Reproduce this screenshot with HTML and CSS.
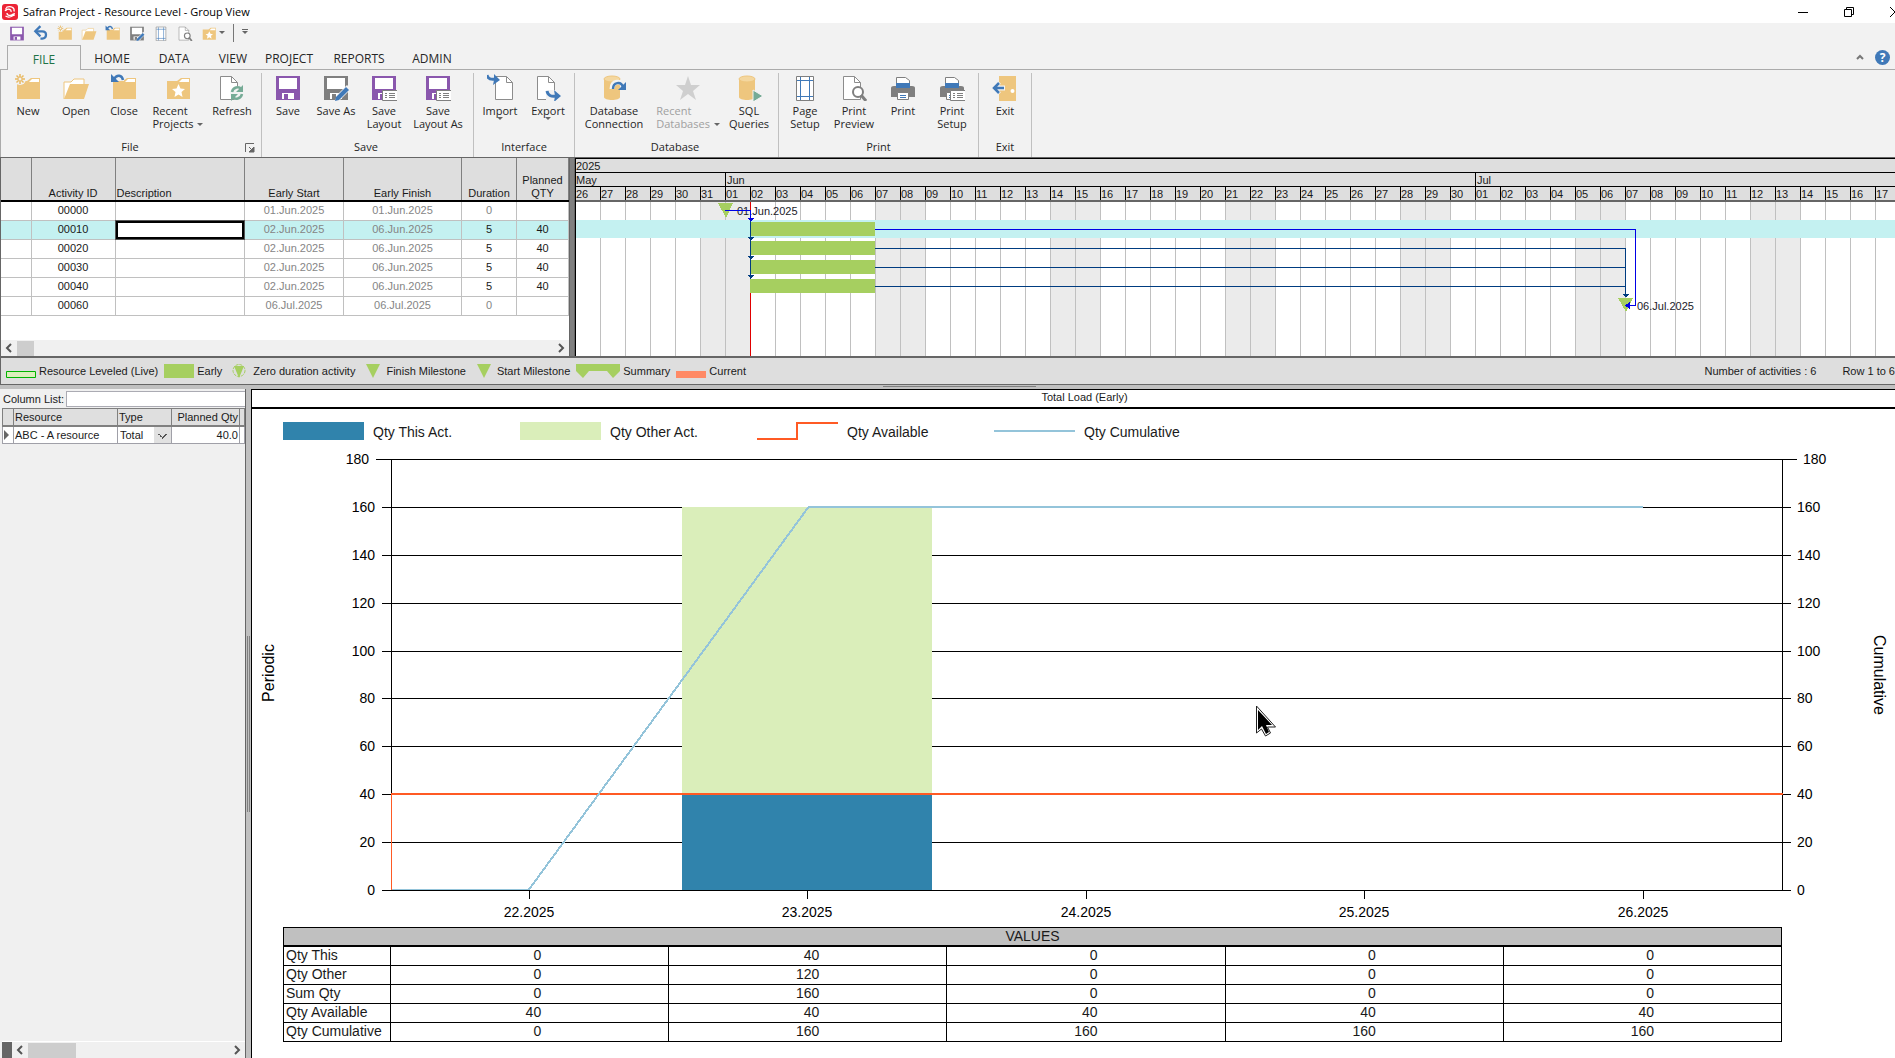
FILE: index.html
```
<!DOCTYPE html>
<html lang="en">

<head>
    <meta charset="UTF-8">
    <meta name="viewport" content="width=device-width, initial-scale=1.0">
    <title>Safran Project - Resource Level - Group View</title>
    <link rel="stylesheet" href="styles.css">
</head>

<body>
    <!-- shared icon shapes -->
    <svg class="defs" aria-hidden="true">
        <symbol id="i-save" viewBox="0 0 26 28">
            <path d="M1 3h24v24H1z" fill="#8a57ad" />
            <path d="M4 5h18v11H4zM7 20h12v6H7z" fill="#fff" />
            <path d="M9 21h4v5H9z" fill="#8a57ad" />
        </symbol>
        <symbol id="i-saveas" viewBox="0 0 26 28">
            <path d="M1 3h24v24H1z" fill="#7f7f7f" />
            <path d="M4 5h18v11H4zM7 20h12v6H7z" fill="#fff" />
            <path d="M9 21h4v5H9z" fill="#7f7f7f" />
            <path d="M12 28l2-6L24 12l4 4-11 11z" fill="#f2f2f2" />
            <path d="M12 28l1-4L23 14l3 3-10 10z" fill="#4079b8" />
        </symbol>
        <symbol id="i-savelayout" viewBox="0 0 26 28">
            <path d="M1 3h24v24H1z" fill="#8a57ad" />
            <path d="M4 5h18v11H4zM7 20h12v6H7z" fill="#fff" />
            <path d="M9 21h4v5H9z" fill="#8a57ad" />
            <use href="#i-list" />
        </symbol>
        <symbol id="i-list" viewBox="0 0 26 28" overflow="visible">
            <path d="M11.5 17.500h15v10h-15z" fill="#fff" stroke="#7f7f7f" />
            <path d="M14 20.500h2M14 22.500h2M14 24.500h2M18 20.500h6M18 22.500h6M18 24.500h6" stroke="#7f7f7f" />
        </symbol>
        <symbol id="i-folder" viewBox="0 0 26 28">
            <path d="M2 8h10l4-3h9v21H2z" fill="#eec67e" />
            <path d="M14 9l3-3h7v3z" fill="#fff" />
        </symbol>
        <symbol id="i-new" viewBox="0 0 26 28">
            <use href="#i-folder" />
            <circle cx="5" cy="6" r="6" fill="#f2f2f2" />
            <path d="M5 1v3M5 8v3M0 6h3M7 6h3M1.500 2.500l2 2M6.500 7.500l2 2M8.500 2.500l-2 2M3.500 7.500l-2 2" stroke="#e9b961" stroke-width="1.500" />
            <circle cx="5" cy="6" r="2" fill="none" stroke="#e9b961" />
        </symbol>
        <symbol id="i-open" viewBox="0 0 26 28">
            <path d="M1 26V9h7l3-3h10v8" fill="#fff" stroke="#eec67e" />
            <path d="M1 26l6-15h19l-5 15z" fill="#eec67e" />
        </symbol>
        <symbol id="i-close" viewBox="0 0 26 28">
            <use href="#i-folder" />
            <path d="M0 0h13v8H0z" fill="#f2f2f2" />
            <path d="M3 6c3-5 8-4 9 1" fill="none" stroke="#4079b8" stroke-width="2.500" />
            <path d="M0 1v8h8z" fill="#4079b8" />
        </symbol>
        <symbol id="i-recent" viewBox="0 0 26 28">
            <use href="#i-folder" />
            <path d="M13.500 11l2 4.500 4.500.5-3.500 3 1 5-4-2.500-4 2.500 1-5-3.500-3 4.500-.5z" fill="#fff" />
        </symbol>
        <symbol id="i-doc" viewBox="0 0 26 28">
            <path d="M4.500 3.500h11l6 6v17h-17z" fill="#fff" stroke="#8c8c8c" />
            <path d="M15.500 3.500v6h6" fill="none" stroke="#8c8c8c" />
        </symbol>
        <symbol id="i-refresh" viewBox="0 0 26 28" overflow="visible">
            <path d="M1.500 3.500h11l6 6v17h-17z" fill="#fff" stroke="#8c8c8c" />
            <path d="M12.500 3.500v6h6" fill="none" stroke="#8c8c8c" />
            <circle cx="18" cy="20" r="7" fill="#f2f2f2" />
            <path d="M13 19c1-5 7-6 9-3M23 21c-1 5-7 6-9 3" fill="none" stroke="#76ab96" stroke-width="2.500" />
            <path d="M24 12v7h-7zM12 28v-7h7z" fill="#76ab96" />
        </symbol>
        <symbol id="i-import" viewBox="0 0 26 28" overflow="visible">
            <use href="#i-doc" x="4" />
            <path d="M0 0h8v8H0z" fill="#f2f2f2" />
            <path d="M0 2c1 4 4 5 9 4" fill="none" stroke="#4079b8" stroke-width="3" />
            <path d="M7 1l6 6-7 5 1-5z" fill="#4079b8" />
        </symbol>
        <symbol id="i-export" viewBox="0 0 26 28" overflow="visible">
            <use href="#i-doc" x="-2" />
            <path d="M11 17h14v11H11z" fill="#f2f2f2" />
            <path d="M12 18c1 5 5 6 9 5" fill="none" stroke="#4079b8" stroke-width="3" />
            <path d="M19 17l7 6-7 6 1-6z" fill="#4079b8" />
        </symbol>
        <symbol id="i-db" viewBox="0 0 26 28">
            <path d="M3 6v18c0 4 16 4 16 0V6z" fill="#eec67e" />
            <ellipse cx="11" cy="6" rx="8" ry="3" fill="#f4d79f" stroke="#eec67e" />
        </symbol>
        <symbol id="i-dbconn" viewBox="0 0 26 28" overflow="visible">
            <use href="#i-db" />
            <path d="M11 16c0-8 9-9 11-3" fill="none" stroke="#f2f2f2" stroke-width="5" />
            <path d="M12 16c0-7 8-8 10-2" fill="none" stroke="#4079b8" stroke-width="2.500" />
            <path d="M25 9v8h-8z" fill="#4079b8" />
        </symbol>
        <symbol id="i-star" viewBox="0 0 26 28">
            <path d="M13 3l3 9h9l-7 6 3 9-8-6-8 6 3-9-7-6h9z" fill="#cfcfcf" />
        </symbol>
        <symbol id="i-sql" viewBox="0 0 26 28" overflow="visible">
            <use href="#i-db" />
            <path d="M17 17l10 6-10 6z" fill="#76ab96" stroke="#f2f2f2" />
        </symbol>
        <symbol id="i-page" viewBox="0 0 26 28">
            <path d="M4.500 3.500h17v24h-17z" fill="#fff" stroke="#7f7f7f" />
            <path d="M8.500 4v23M17.500 4v23M5 7.500h16M5 23.500h16" stroke="#4079b8" />
        </symbol>
        <symbol id="i-preview" viewBox="0 0 26 28" overflow="visible">
            <use href="#i-doc" x="-2" />
            <circle cx="17" cy="19" r="5" fill="#fff" stroke="#7f7f7f" stroke-width="2" />
            <path d="M20 22l5 6" stroke="#7f7f7f" stroke-width="3" />
        </symbol>
        <symbol id="i-print" viewBox="0 0 26 28">
            <path d="M6.500 10V4.500h9l4 3V10" fill="#fff" stroke="#7f7f7f" />
            <path d="M1 15q0-2 3-2h18q3 0 3 2v9H1z" fill="#7f7f7f" />
            <path d="M6 10h14v5H6z" fill="#4079b8" />
            <path d="M7.500 19.500h11v7h-11z" fill="#fff" stroke="#7f7f7f" />
            <path d="M10 22.500h6M10 24.500h6" stroke="#4079b8" />
        </symbol>
        <symbol id="i-printset" viewBox="0 0 26 28" overflow="visible">
            <use href="#i-print" />
            <use href="#i-list" />
        </symbol>
        <symbol id="i-exit" viewBox="0 0 26 28">
            <path d="M7 3h17v25H7z" fill="#eec67e" />
            <circle cx="20.500" cy="18" r="2" fill="#fff" />
            <path d="M1 15h12M7 9l-5 6 5 6" fill="none" stroke="#f2f2f2" stroke-width="5" />
            <path d="M2 15h10M7 10l-5 5 5 5" fill="none" stroke="#4079b8" stroke-width="2.500" />
        </symbol>
        <symbol id="i-undo" viewBox="0 0 26 28">
            <path d="M5 11h10c9 0 9 12 0 13h-3" fill="none" stroke="#4079b8" stroke-width="4" />
            <path d="M12 2L3 11l9 9" fill="none" stroke="#4079b8" stroke-width="4" />
        </symbol>
        <symbol id="i-left" viewBox="0 0 16 16">
            <path d="M10 4L6 8l4 4" fill="none" stroke="#555" stroke-width="2" />
        </symbol>
        <symbol id="i-right" viewBox="0 0 16 16">
            <path d="M6 4l4 4-4 4" fill="none" stroke="#555" stroke-width="2" />
        </symbol>
    </svg>

    <header class="titlebar">
        <svg class="logo" viewBox="0 0 16 16">
            <rect width="16" height="16" rx="3" fill="#ec2436" />
            <path d="M4 3.500c5-2 9 0 8 4M3 7c2-3 7-2 6 1M12.500 9c-1 4-6 5-9 3M5 9c0 3 4 3 6 1M4 4v3M12 12v-3" fill="none" stroke="#fff" stroke-width="1.300" />
        </svg>
        <h1 class="title">Safran Project - Resource Level - Group View</h1>
        <div class="window-btns">
            <button class="win-btn" aria-label="Minimize"><svg viewBox="0 0 12 12"><path d="M1 6.500h10" /></svg></button>
            <button class="win-btn" aria-label="Restore"><svg viewBox="0 0 12 12"><path d="M1.500 3.500h7v7h-7zM3.500 3V1.500h7v7H9" /></svg></button>
            <button class="win-btn" aria-label="Close"><svg viewBox="0 0 12 12"><path d="M1 1l10 10M11 1L1 11" /></svg></button>
        </div>
    </header>

    <div class="quickbar">
        <button class="quick" aria-label="Save"><svg><use href="#i-save" /></svg></button>
        <button class="quick" aria-label="Undo"><svg><use href="#i-undo" /></svg></button>
        <button class="quick" aria-label="New"><svg><use href="#i-new" /></svg></button>
        <button class="quick" aria-label="Open"><svg><use href="#i-open" /></svg></button>
        <button class="quick" aria-label="Close"><svg><use href="#i-close" /></svg></button>
        <button class="quick" aria-label="Save as"><svg><use href="#i-saveas" /></svg></button>
        <button class="quick" aria-label="Page setup"><svg><use href="#i-page" /></svg></button>
        <button class="quick" aria-label="Print preview"><svg><use href="#i-preview" /></svg></button>
        <div class="quick-menu">
            <button class="quick" aria-label="Recent projects"><svg><use href="#i-recent" /></svg></button>
            <i class="caret"></i>
        </div>
        <span class="quick-sep"></span>
        <i class="caret caret-bar"></i>
    </div>

    <nav class="tabs">
        <button class="tab tab-file">FILE</button>
        <button class="tab">HOME</button>
        <button class="tab">DATA</button>
        <button class="tab tab-narrow">VIEW</button>
        <button class="tab tab-narrow">PROJECT</button>
        <button class="tab tab-wide">REPORTS</button>
        <button class="tab">ADMIN</button>
        <div class="tabs-rest">
            <svg class="collapse" viewBox="0 0 10 10"><path d="M2 7l3-3 3 3" fill="none" stroke="#777" stroke-width="2" /></svg>
            <button class="help" aria-label="Help">?</button>
        </div>
    </nav>

    <div class="ribbon">
        <section class="group">
            <div class="tools">
                <button class="tool"><svg><use href="#i-new" /></svg>New</button>
                <button class="tool"><svg><use href="#i-open" /></svg>Open</button>
                <button class="tool"><svg><use href="#i-close" /></svg>Close</button>
                <button class="tool tool-wide"><svg><use href="#i-recent" /></svg><span class="lines">Recent<br>Projects <i class="caret"></i></span></button>
                <button class="tool"><svg><use href="#i-refresh" /></svg>Refresh</button>
            </div>
            <h2 class="group-name">File</h2>
            <svg class="launcher" viewBox="0 0 10 10"><path d="M.5 9V.5H9" fill="none" stroke="#666" /><path d="M4 9h5V4zM4 4l4 4" fill="#666" stroke="#666" /></svg>
        </section>
        <section class="group">
            <div class="tools">
                <button class="tool"><svg><use href="#i-save" /></svg>Save</button>
                <button class="tool"><svg><use href="#i-saveas" /></svg>Save As</button>
                <button class="tool"><svg><use href="#i-savelayout" /></svg>Save<br>Layout</button>
                <button class="tool tool-wide"><svg><use href="#i-savelayout" /></svg>Save<br>Layout As</button>
            </div>
            <h2 class="group-name">Save</h2>
        </section>
        <section class="group group-tight">
            <div class="tools">
                <button class="tool"><svg><use href="#i-import" /></svg>Import<br><i class="caret"></i></button>
                <button class="tool"><svg><use href="#i-export" /></svg>Export<br><i class="caret"></i></button>
            </div>
            <h2 class="group-name">Interface</h2>
        </section>
        <section class="group">
            <div class="tools">
                <button class="tool tool-xwide"><svg><use href="#i-dbconn" /></svg>Database<br>Connection</button>
                <button class="tool tool-xwide" disabled><svg><use href="#i-star" /></svg><span class="lines">Recent<br>Databases <i class="caret"></i></span></button>
                <button class="tool"><svg><use href="#i-sql" /></svg>SQL<br>Queries</button>
            </div>
            <h2 class="group-name">Database</h2>
        </section>
        <section class="group group-tight">
            <div class="tools tools-gap">
                <button class="tool"><svg><use href="#i-page" /></svg>Page<br>Setup</button>
                <button class="tool"><svg><use href="#i-preview" /></svg>Print<br>Preview</button>
                <button class="tool"><svg><use href="#i-print" /></svg>Print</button>
                <button class="tool"><svg><use href="#i-printset" /></svg>Print<br>Setup</button>
            </div>
            <h2 class="group-name">Print</h2>
        </section>
        <section class="group group-tight">
            <div class="tools">
                <button class="tool"><svg><use href="#i-exit" /></svg>Exit</button>
            </div>
            <h2 class="group-name">Exit</h2>
        </section>
    </div>

    <main class="workspace">
        <!-- activities + gantt -->
        <div class="upper">
            <div class="activities">
                <table class="act-table">
                    <colgroup>
                        <col class="c-mark"><col class="c-id"><col><col class="c-start"><col class="c-finish"><col class="c-dur"><col class="c-qty">
                    </colgroup>
                    <thead>
                        <tr>
                            <th></th>
                            <th>Activity ID</th>
                            <th class="left">Description</th>
                            <th>Early Start</th>
                            <th>Early Finish</th>
                            <th>Duration</th>
                            <th>Planned QTY</th>
                        </tr>
                    </thead>
                    <tbody>
                        <tr><td></td><td>00000</td><td></td><td class="dim">01.Jun.2025</td><td class="dim">01.Jun.2025</td><td class="dim">0</td><td></td></tr>
                        <tr class="selected"><td></td><td>00010</td><td class="edit"><input type="text" class="cell-input" aria-label="Description"></td><td class="dim">02.Jun.2025</td><td class="dim">06.Jun.2025</td><td>5</td><td>40</td></tr>
                        <tr><td></td><td>00020</td><td></td><td class="dim">02.Jun.2025</td><td class="dim">06.Jun.2025</td><td>5</td><td>40</td></tr>
                        <tr><td></td><td>00030</td><td></td><td class="dim">02.Jun.2025</td><td class="dim">06.Jun.2025</td><td>5</td><td>40</td></tr>
                        <tr><td></td><td>00040</td><td></td><td class="dim">02.Jun.2025</td><td class="dim">06.Jun.2025</td><td>5</td><td>40</td></tr>
                        <tr><td></td><td>00060</td><td></td><td class="dim">06.Jul.2025</td><td class="dim">06.Jul.2025</td><td class="dim">0</td><td></td></tr>
                    </tbody>
                </table>
                <div class="scrollbar">
                    <button class="arrow" aria-label="Scroll left"><svg><use href="#i-left" /></svg></button>
                    <span class="thumb"></span>
                    <button class="arrow arrow-end" aria-label="Scroll right"><svg><use href="#i-right" /></svg></button>
                </div>
            </div>
            <div class="splitter-v"></div>
            <div class="gantt">
                <div class="scale">2025</div>
                <div class="scale">
                    <span class="month month-may">May</span>
                    <span class="month month-jun">Jun</span>
                    <span class="month">Jul</span>
                </div>
                <div class="scale scale-days" id="days"></div>
                <div class="gantt-body">
                    <svg class="gantt-svg" shape-rendering="crispEdges">
                        <rect x="0" y="18" width="100%" height="18" fill="#c4f1f1" />
                        <path d="M175.500 0v154" stroke="#e00000" />
                        <g fill="#a6cf60">
                            <rect x="175" y="20" width="125" height="14" />
                            <rect x="175" y="39" width="125" height="14" />
                            <rect x="175" y="58" width="125" height="14" />
                            <rect x="175" y="77" width="125" height="14" />
                            <path d="M143 1h15l-7 15zM1043 96h15l-7 14z" />
                        </g>
                        <g font-size="11" fill="#1a1a2a" shape-rendering="auto">
                            <text x="162" y="13">01.Jun.2025</text>
                            <text x="1062" y="108">06.Jul.2025</text>
                        </g>
                        <g fill="none" stroke="#003c80">
                            <path d="M175.500 18v59M300 46.500h750M300 65.500h750M300 84.500h750M1050.500 46v48" />
                        </g>
                        <path d="M150 8.500h25.500v9M300 27.500h760.500v76h-8" fill="none" stroke="#0000e6" />
                        <path d="M172 16h7l-3 4zM1050 103.500l5-4v8z" fill="#0000e6" />
                        <path d="M172 35h7l-3 4zM172 54h7l-3 4zM172 73h7l-3 4zM1047 92h7l-3 4z" fill="#003c80" />
                    </svg>
                </div>
            </div>
        </div>

        <div class="legend">
            <span class="key"><svg width="30" height="14"><path d="M.5 7.500h29v6H.5z" fill="#dbefbb" stroke="#00b400" /></svg>Resource Leveled (Live)</span>
            <span class="key"><svg width="30" height="14"><path d="M0 0h30v14H0z" /></svg>Early</span>
            <span class="key"><svg width="22" height="14"><path d="M6 2h10l-5 12z" /><circle cx="11" cy="6.500" r="6" fill="none" stroke="#a6cf60" stroke-dasharray="3 1" /></svg>Zero duration activity</span>
            <span class="key"><svg width="22" height="14"><path d="M5 0h14l-7 14z" /></svg>Finish Milestone</span>
            <span class="key"><svg width="22" height="14"><path d="M5 0h14l-7 14z" /></svg>Start Milestone</span>
            <span class="key"><svg width="44" height="14"><path d="M0 0h44v7l-7 7-6-7H13l-6 7-7-7z" /></svg>Summary</span>
            <span class="key"><svg width="30" height="14"><path d="M0 7h30v7H0z" fill="#ff8a65" /></svg>Current</span>
            <span class="status">Number of activities : 6</span>
            <span class="status-row">Row 1 to 6</span>
        </div>
        <div class="splitter-h"></div>

        <!-- resource list + load chart -->
        <div class="lower">
            <aside class="resources">
                <div class="column-list">
                    <label for="columnList">Column List:</label>
                    <input type="text" id="columnList" class="column-input">
                </div>
                <table class="res-table">
                    <colgroup><col class="r-mark"><col><col class="r-type"><col class="r-qty"><col class="r-end"></colgroup>
                    <thead>
                        <tr><th></th><th>Resource</th><th>Type</th><th class="right">Planned Qty</th><th></th></tr>
                    </thead>
                    <tbody>
                        <tr>
                            <td><i class="pointer"></i></td>
                            <td>ABC - A resource</td>
                            <td class="pick"><select class="type-select" aria-label="Type"><option>Total</option></select></td>
                            <td class="right">40.0</td>
                            <td></td>
                        </tr>
                    </tbody>
                </table>
                <div class="scrollbar scrollbar-bottom">
                    <span class="grip"></span>
                    <button class="arrow" aria-label="Scroll left"><svg><use href="#i-left" /></svg></button>
                    <span class="thumb thumb-wide"></span>
                    <button class="arrow arrow-end" aria-label="Scroll right"><svg><use href="#i-right" /></svg></button>
                </div>
            </aside>
            <div class="splitter-side"></div>
            <section class="load">
                <h2 class="load-title">Total Load (Early)</h2>
                <div class="chart-legend">
                    <span class="series"><svg><path d="M0 0h81v18H0z" fill="#3083ac" /></svg>Qty This Act.</span>
                    <span class="series"><svg><path d="M0 0h81v18H0z" fill="#daeeba" /></svg>Qty Other Act.</span>
                    <span class="series"><svg><path d="M0 17h40V1h41" fill="none" stroke="#ff5a24" stroke-width="2" /></svg>Qty Available</span>
                    <span class="series"><svg><path d="M0 9h81" stroke="#94c4da" stroke-width="2" /></svg>Qty Cumulative</span>
                </div>
                <svg class="chart" id="chart" viewBox="0 0 1643 477" shape-rendering="crispEdges">
                    <g id="grid" stroke="#000"></g>
                    <rect x="430" y="57" width="250" height="287" fill="#daeeba" />
                    <rect x="430" y="344" width="250" height="96" fill="#3083ac" />
                    <path d="M139.500 9v431M1530.500 9v431" stroke="#000" />
                    <path d="M139.500 440v-96" stroke="#ff5a24" />
                    <path d="M139 344h1392" stroke="#ff5a24" stroke-width="2" />
                    <path d="M140 439.500h137L556.500 57H1391" fill="none" stroke="#94c4da" stroke-width="2" />
                    <path d="M130 440.500h1409" stroke="#000" />
                    <g id="labels" font-size="14"></g>
                    <text class="axis-name" transform="translate(22 223) rotate(-90)">Periodic</text>
                    <text class="axis-name" transform="translate(1622 225) rotate(90)">Cumulative</text>
                    <!-- mouse pointer -->
                    <g shape-rendering="auto">
                        <path d="M1004.500 256v27l5-4 4 7 5-3-3-6h8z" fill="#fff" stroke="#222" stroke-width="1" />
                        <path d="M1006 260v20l4-4 4 8 3-2-3-7h6z" fill="#000" />
                    </g>
                </svg>
                <table class="values">
                    <colgroup><col class="v-name"><col><col><col><col><col></colgroup>
                    <thead>
                        <tr><th colspan="6">VALUES</th></tr>
                    </thead>
                    <tbody>
                        <tr><th>Qty This</th><td>0</td><td>40</td><td>0</td><td>0</td><td>0</td></tr>
                        <tr><th>Qty Other</th><td>0</td><td>120</td><td>0</td><td>0</td><td>0</td></tr>
                        <tr><th>Sum Qty</th><td>0</td><td>160</td><td>0</td><td>0</td><td>0</td></tr>
                        <tr><th>Qty Available</th><td>40</td><td>40</td><td>40</td><td>40</td><td>40</td></tr>
                        <tr><th>Qty Cumulative</th><td>0</td><td>160</td><td>160</td><td>160</td><td>160</td></tr>
                    </tbody>
                </table>
            </section>
        </div>
    </main>

    <script src="script.js"></script>
</body>

</html>
```

FILE: styles.css
```
* {
    margin: 0;
    padding: 0;
    box-sizing: border-box;
}

body {
    min-height: 100vh;
    display: flex;
    flex-direction: column;
    overflow: hidden;
    background-color: #f2f2f2;
    color: #1a1a1a;
    font-family: "Liberation Sans", Arial, sans-serif;
    font-size: 11px;
}

button {
    border: none;
    background: none;
    font: inherit;
    color: inherit;
}

h1,
h2,
th {
    font-size: inherit;
    font-weight: normal;
}

table {
    border-collapse: collapse;
    table-layout: fixed;
    width: 100%;
}

.defs {
    display: none;
}

/* title bar */
.titlebar {
    display: flex;
    align-items: center;
    height: 23px;
    padding-left: 2px;
    background-color: #fff;
    font-family: "Open Sans", "Noto Sans", sans-serif;
    color: #000;
    overflow: hidden;
}

.logo {
    width: 16px;
    height: 16px;
    margin-right: 5px;
}

.title {
    font-size: 11px;
    line-height: 16px;
}

.window-btns {
    display: flex;
    gap: 34px;
    margin-left: auto;
    margin-right: -6px;
}

.win-btn svg {
    display: block;
    width: 12px;
    height: 12px;
    fill: none;
    stroke: #000;
}

/* quick access bar */
.quickbar {
    display: flex;
    align-items: center;
    gap: 8px;
    height: 22px;
    padding: 0 0 3px 9px;
}

.quick svg {
    display: block;
    width: 16px;
    height: 16px;
}

.quick-menu {
    display: flex;
    align-items: center;
    gap: 2px;
}

.caret {
    display: inline-block;
    border: 3px solid transparent;
    border-top-color: #666;
    border-bottom: none;
}

.quick-sep {
    width: 1px;
    height: 18px;
    background-color: #777;
}

.caret-bar::before {
    content: "";
    display: block;
    width: 6px;
    height: 1px;
    margin: -5px -3px 0;
    background-color: #666;
}

/* tabs */
.tabs {
    display: flex;
    height: 25px;
    font-family: "Open Sans", "Noto Sans", sans-serif;
    font-size: 12px;
    color: #262626;
}

.tabs::before {
    content: "";
    width: 7px;
    border-bottom: 1px solid #ababab;
}

.tab {
    width: 62px;
    padding-top: 3px;
    border-bottom: 1px solid #ababab;
}

.tab-file {
    width: 74px;
    border: 1px solid #ababab;
    border-bottom: none;
    color: #217346;
}

.tab-narrow {
    width: 56px;
}

.tab-wide {
    width: 84px;
}

.tabs-rest {
    flex: 1;
    display: flex;
    align-items: center;
    justify-content: flex-end;
    gap: 10px;
    padding: 0 5px 0 0;
    border-bottom: 1px solid #ababab;
}

.collapse {
    width: 10px;
    height: 10px;
}

.help {
    width: 15px;
    height: 15px;
    border-radius: 50%;
    background-color: #4079b8;
    color: #fff;
    font-weight: bold;
    line-height: 15px;
}

/* ribbon */
.ribbon {
    display: flex;
    height: 87px;
    padding: 3px 0 0 1px;
    border-left: 1px solid #ababab;
    font-family: "Open Sans", "Noto Sans", sans-serif;
    font-size: 11px;
    color: #262626;
}

.group {
    position: relative;
    display: flex;
    flex-direction: column;
    justify-content: space-between;
    padding: 0 5px 0 2px;
    border-right: 1px solid #c0c0c0;
    line-height: 13px;
}

.group-tight {
    padding: 0 2px;
}

.tools {
    display: flex;
}

.tools-gap {
    gap: 1px;
}

.tool {
    display: flex;
    flex-direction: column;
    align-items: center;
    width: 48px;
    line-height: 13px;
    white-space: nowrap;
}

.tool:disabled {
    color: #a0a0a0;
}

.tool svg {
    width: 26px;
    height: 28px;
    margin-bottom: 3px;
}

.tool br {
    line-height: 0;
}

.tool-wide {
    width: 60px;
}

.tool-xwide {
    width: 74px;
}

.lines {
    text-align: left;
}

.lines .caret {
    margin: 0 0 2px 1px;
}

.group-name {
    padding-bottom: 4px;
    text-align: center;
}

.launcher {
    position: absolute;
    right: 6px;
    bottom: 4px;
    width: 10px;
    height: 10px;
}

/* upper pane */
.workspace {
    flex: 1;
    display: flex;
    flex-direction: column;
    background-color: #c0c0c0;
}

.upper {
    display: flex;
    border-top: 1px solid #666;
    border-bottom: 2px solid #666;
}

.activities {
    display: flex;
    flex-direction: column;
    width: 569px;
    border-left: 1px solid #666;
    background-color: #fff;
}

.act-table {
    text-align: center;
}

.c-mark {
    width: 30px;
}

.c-id {
    width: 84px;
}

.c-start {
    width: 99px;
}

.c-finish {
    width: 118px;
}

.c-dur {
    width: 55px;
}

.c-qty {
    width: 52px;
}

.act-table th {
    height: 43px;
    border-right: 1px solid #808080;
    border-bottom: 2px solid #000;
    background-color: #dedede;
    line-height: 13px;
    vertical-align: bottom;
}

.act-table td {
    height: 19px;
    border-right: 1px solid #c0c0c0;
    border-bottom: 1px solid #c0c0c0;
    line-height: 16px;
    vertical-align: top;
}

.act-table .left {
    text-align: left;
    padding-left: 1px;
}

.act-table .dim {
    color: #858585;
}

.selected td {
    background-color: #c4f1f1;
}

.cell-input {
    display: block;
    width: 100%;
    height: 18px;
    border: 2px solid #000;
    outline: 1px solid #555;
    background-color: #fff;
    font: inherit;
}

/* scroll bars */
.scrollbar {
    display: flex;
    align-items: center;
    height: 16px;
    margin-top: auto;
    background-color: #f0f0f0;
}

.arrow svg {
    display: block;
    width: 16px;
    height: 16px;
}

.arrow-end {
    margin-left: auto;
}

.thumb {
    width: 17px;
    height: 15px;
    background-color: #cdcdcd;
}

.thumb-wide {
    width: 48px;
}

.splitter-v {
    width: 6px;
    border: 1px solid #666;
    border-width: 0 1px;
    background-color: #808080;
}

/* gantt */
.gantt {
    flex: 1;
    min-width: 0;
    overflow: hidden;
    background-color: #dedede;
    border-left: 1px solid #000;
}

.scale {
    display: flex;
    height: 14px;
    border-top: 1px solid #000;
    line-height: 14px;
}

.scale-days {
    height: 16px;
    border-bottom: 2px solid #666;
}

.month {
    padding-left: 1px;
    border-left: 1px solid #000;
}

.month-may {
    width: 149px;
    padding-left: 0;
    border-left: none;
}

.month-jun {
    width: 750px;
}

.day {
    flex: none;
    width: 25px;
    border-right: 1px solid #000;
}

.gantt-body {
    height: 154px;
    margin-left: -1px;
    background-color: #fff;
    background-image: repeating-linear-gradient(to right, #c0c0c0 0, #c0c0c0 1px, transparent 1px, transparent 25px),
        repeating-linear-gradient(to right, #fff 0, #fff 125px, #ebebeb 125px, #ebebeb 175px);
}

.gantt-svg {
    display: block;
    width: 100%;
    height: 154px;
}

/* legend strip */
.legend {
    display: flex;
    align-items: center;
    gap: 6px;
    height: 27px;
    padding-left: 5px;
    border-left: 1px solid #666;
    border-bottom: 1px solid #666;
    background-color: #dedede;
    white-space: nowrap;
    overflow: hidden;
}

.key {
    display: flex;
    align-items: center;
    gap: 3px;
}

.key svg {
    fill: #a6cf60;
}

.status {
    margin-left: auto;
}

.status-row {
    margin-left: 20px;
}

.splitter-h {
    height: 4px;
    background: linear-gradient(#808080, #808080) 883px 1px / 153px 1px no-repeat;
}

/* lower pane */
.lower {
    flex: 1;
    display: flex;
}

.resources {
    display: flex;
    flex-direction: column;
    width: 246px;
    padding-left: 2px;
    border-right: 1px solid #666;
    background-color: #f0f0f0;
}

.column-list {
    display: flex;
    align-items: center;
    gap: 2px;
    height: 19px;
    padding-left: 1px;
}

.column-input {
    flex: 1;
    min-width: 0;
    height: 16px;
    border: 1px solid #ababb3;
    border-right: none;
    background-color: #fff;
}

.res-table {
    border-left: 1px solid #808080;
}

.r-mark {
    width: 11px;
}

.r-type {
    width: 54px;
}

.r-qty {
    width: 68px;
}

.r-end {
    width: 5px;
}

.res-table th {
    height: 17px;
    padding-left: 1px;
    border: 1px solid #808080;
    border-bottom-width: 2px;
    background-color: #dfdfdf;
    text-align: left;
}

.res-table td {
    height: 18px;
    padding-left: 1px;
    border: 1px solid #a0a0a8;
    background-color: #fff;
    white-space: nowrap;
}

.res-table .right {
    text-align: right;
    padding-right: 1px;
}

.pointer {
    display: block;
    border: 5px solid transparent;
    border-left-color: #666;
    border-right: none;
}

.type-select {
    display: block;
    width: 100%;
    height: 16px;
    padding-left: 1px;
    border: none;
    appearance: none;
    background: linear-gradient(45deg, transparent 50%, #555 50%, #555 65%, transparent 65%) right 8px top 7px / 5px 5px no-repeat,
        linear-gradient(-45deg, transparent 50%, #555 50%, #555 65%, transparent 65%) right 4px top 7px / 5px 5px no-repeat,
        linear-gradient(#e1e1e1, #e1e1e1) right top / 17px 16px no-repeat #fff;
    font: inherit;
    color: inherit;
}

.scrollbar-bottom {
    height: 17px;
    border-top: 1px solid #fff;
}

.grip {
    align-self: stretch;
    width: 10px;
    background-color: #666;
}

.splitter-side {
    width: 5px;
    background: linear-gradient(to right, #808080 1px, #c0c0c0 1px, #c0c0c0 2px, #808080 2px, #808080 3px, #c0c0c0 3px) 1px 50% / 3px 176px no-repeat #c0c0c0;
}

.load {
    flex: 1;
    min-width: 0;
    padding-bottom: 10px;
    border-left: 1px solid #000;
    background-color: #fff;
}

.load-title {
    height: 20px;
    border-top: 1px solid #000;
    border-bottom: 2px solid #000;
    padding-left: 22px;
    line-height: 15px;
    text-align: center;
}

.chart-legend {
    display: flex;
    height: 41px;
    padding: 13px 0 0 31px;
    font-size: 14px;
}

.series {
    display: flex;
    gap: 9px;
    width: 237px;
    height: 18px;
    line-height: 20px;
}

.series svg {
    width: 81px;
    height: 18px;
}

.chart {
    display: block;
    width: 100%;
}

.axis-name {
    font-size: 16px;
    text-anchor: middle;
}

.values {
    width: calc(100% - 144px);
    margin-left: 31px;
    font-size: 14px;
    line-height: 17px;
}

.v-name {
    width: 107px;
}

.values th {
    height: 18px;
    border: 1px solid #000;
}

.values td {
    height: 19px;
    padding-right: 127px;
    border: 1px solid #000;
    text-align: right;
}

.values thead th {
    border-bottom-width: 2px;
    background-color: #c0c0c0;
}

.values tbody th {
    padding-left: 2px;
    text-align: left;
    white-space: nowrap;
}
```

FILE: script.js
```
// day cells of the gantt scale, starting 26 May
const monthLengths = [31, 30, 31];
let day = 26;
let month = 0;
const days = document.getElementById('days');

for (let i = 0; i < 53; i++) {
    const cell = document.createElement('span');
    cell.className = 'day';
    cell.textContent = String(day).padStart(2, '0');
    days.appendChild(cell);
    day++;
    if (day > monthLengths[month]) {
        day = 1;
        month++;
    }
}

// chart grid lines and axis labels
const bottom = 440;
const top180 = 9;
let lines = '';
let labels = '';

for (let v = 0; v <= 180; v += 20) {
    const y = Math.round(bottom - (bottom - top180) * v / 180);
    const out = v === 180 ? 6 : 0;
    lines += `<path d="M${130 - out} ${y}.5H${1539 + out}" />`;
    labels += `<text x="${123 - out}" y="${y + 5}" text-anchor="end">${v}</text>`;
    labels += `<text x="${1545 + out}" y="${y + 5}">${v}</text>`;
}

['22.2025', '23.2025', '24.2025', '25.2025', '26.2025'].forEach((week, i) => {
    const x = 277 + Math.floor(i * 278.5);
    lines += `<path d="M${x}.5 440v9" />`;
    labels += `<text x="${x}" y="467" text-anchor="middle">${week}</text>`;
});

document.getElementById('grid').innerHTML = lines;
document.getElementById('labels').innerHTML = labels;
```
